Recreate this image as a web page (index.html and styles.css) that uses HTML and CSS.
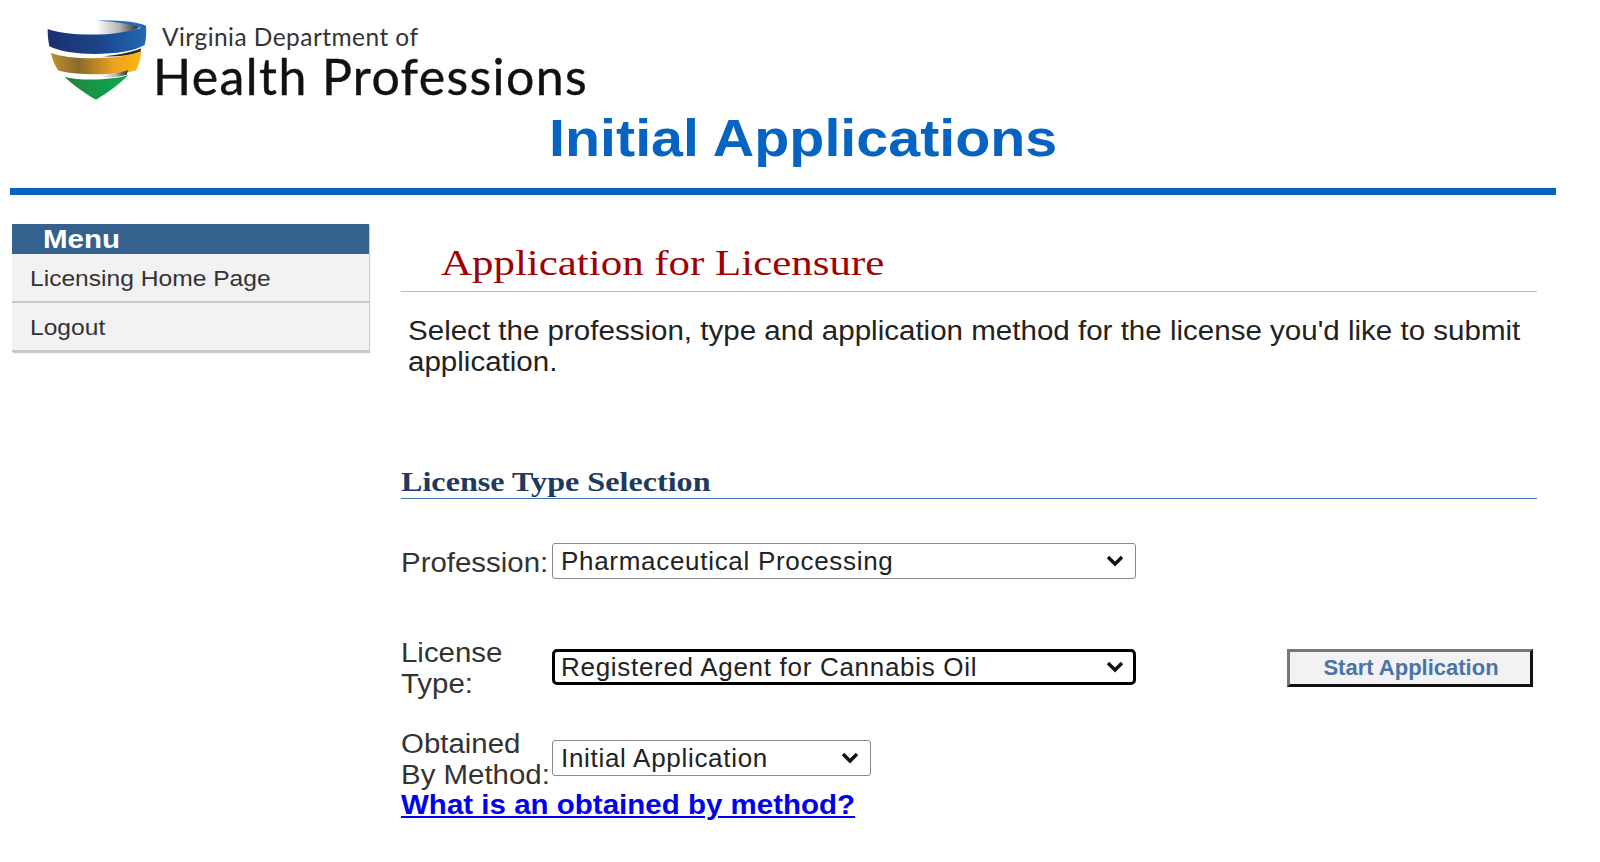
FILE: index.html
```html
<!DOCTYPE html>
<html lang="en">
<head>
    <meta charset="UTF-8">
    <meta name="viewport" content="width=device-width, initial-scale=1.0">
    <title>Initial Applications</title>
    <link rel="stylesheet" href="styles.css">
</head>
<body>
    <header class="site-header">
        <div class="brand">
            <svg class="brand-logo" width="104" height="84" viewBox="50 30 312 252" aria-hidden="true">
                <defs>
                    <linearGradient id="blueBand" x1="0" x2="1" y1="0" y2="0">
                        <stop offset="0" stop-color="#1c2f6e"/>
                        <stop offset="0.5" stop-color="#1b4388"/>
                        <stop offset="1" stop-color="#2069b5"/>
                    </linearGradient>
                    <linearGradient id="goldBand" x1="0" x2="1" y1="0" y2="0">
                        <stop offset="0" stop-color="#c0912c"/>
                        <stop offset="0.3" stop-color="#8a6a2c"/>
                        <stop offset="0.7" stop-color="#eaa31e"/>
                        <stop offset="1" stop-color="#fdb515"/>
                    </linearGradient>
                    <linearGradient id="greenBand" x1="0" x2="1" y1="0" y2="0">
                        <stop offset="0" stop-color="#2f7f3c"/>
                        <stop offset="0.6" stop-color="#0f9c4a"/>
                        <stop offset="1" stop-color="#12a650"/>
                    </linearGradient>
                    <linearGradient id="innerBand" x1="0" x2="1" y1="0" y2="0">
                        <stop offset="0.35" stop-color="#ffffff"/>
                        <stop offset="0.7" stop-color="#b5b5b5"/>
                        <stop offset="1" stop-color="#2a2a2a"/>
                    </linearGradient>
                </defs>
                <path d="M205 36C255 36 310 42 330 55C310 70 270 78 130 76C170 65 200 50 205 36Z" fill="url(#innerBand)"/>
                <path d="M205 35C260 33 325 38 350 50L345 62C320 46 265 38 205 35Z" fill="#2069b5"/>
                <path d="M55 60C110 82 270 86 350 50C352 70 350 92 346 108C290 142 120 144 60 112C56 92 55 75 55 60Z" fill="url(#blueBand)"/>
                <path d="M215 142C260 140 310 130 336 118L333 128C300 140 260 144 215 142Z" fill="#2a2a2a"/>
                <path d="M65 131C115 153 270 155 336 127C334 150 328 170 320 184C270 200 130 200 86 184C76 167 68 149 65 131Z" fill="url(#goldBand)"/>
                <path d="M170 200C215 202 265 194 296 184L292 197C260 206 215 208 170 205Z" fill="url(#innerBand)"/>
                <path d="M105 203C150 216 250 214 298 198C270 225 235 252 200 272C165 252 130 226 105 203Z" fill="url(#greenBand)"/>
            </svg>
            <div class="brand-text">
                <div class="brand-dept">Virginia Department of</div>
                <div class="brand-name">Health Professions</div>
            </div>
        </div>
        <h1 class="page-title"><span class="page-title-text">Initial Applications</span></h1>
    </header>

    <div class="page-body">
        <nav class="side-menu">
            <div class="menu-title"><span class="menu-title-text">Menu</span></div>
            <a class="menu-item" href="#"><span class="menu-item-text">Licensing Home Page</span></a>
            <a class="menu-item" href="#"><span class="menu-item-text">Logout</span></a>
        </nav>

        <main class="content">
            <h2 class="content-title"><span class="content-title-text">Application for Licensure</span></h2>
            <p class="intro">Select the profession, type and application method for the license you'd like to submit application.</p>

            <h3 class="section-title"><span class="section-title-text">License Type Selection</span></h3>

            <div class="field field-profession">
                <label class="field-label" for="profession">Profession:</label>
                <select class="field-select" id="profession">
                    <option>Pharmaceutical Processing</option>
                </select>
            </div>

            <div class="field field-license">
                <label class="field-label" for="licenseType">License Type:</label>
                <select class="field-select focused" id="licenseType">
                    <option>Registered Agent for Cannabis Oil</option>
                </select>
                <button class="start-button" type="button">Start Application</button>
            </div>

            <div class="field field-method">
                <label class="field-label" for="method">Obtained By Method:</label>
                <select class="field-select short" id="method">
                    <option>Initial Application</option>
                </select>
            </div>
            <a class="help-link" href="#">What is an obtained by method?</a>
        </main>
    </div>
</body>
</html>
```

FILE: styles.css
```css
body {
    font-family: "Liberation Sans", Arial, sans-serif;
    background-color: #fff;
    color: #222;
    margin: 0;
    padding: 0;
}

/* the page text is drawn a bit wider than the plain font */
.menu-title-text,
.menu-item-text,
.content-title-text,
.section-title-text {
    display: inline-block;
    transform-origin: left center;
}

.site-header {
    margin: 0 44px 0 10px;
    height: 195px;
    box-sizing: border-box;
    border-bottom: 7px solid #0563c1;
}

.brand {
    display: flex;
    padding: 19px 0 0 36px;
    height: 84px;
}

.brand-logo {
    flex: none;
}

.brand-text {
    font-family: Lato, "Liberation Sans", sans-serif;
    color: #111;
    margin-left: 3px;
}

.brand-dept {
    font-size: 24.5px;
    line-height: 28px;
    letter-spacing: 0.45px;
    margin: 4px 0 0 9px;
    color: #333;
}

.brand-name {
    font-size: 50px;
    line-height: 50px;
    letter-spacing: 1.4px;
    -webkit-text-stroke: 0.4px #111;
}

.page-title {
    margin: 5px 0 0 40px;
    font-size: 52px;
    line-height: 60px;
    font-weight: bold;
    text-align: center;
    color: #0563c1;
}

.page-title-text {
    display: inline-block;
    transform: scaleX(1.104);
}

.page-body {
    display: flex;
    padding: 29px 0 0 12px;
}

.side-menu {
    flex: none;
    width: 357px;
    align-self: flex-start;
    box-shadow: 1px 1px 1px #ccc;
}

.menu-title {
    background-color: #34618e;
    color: #fff;
    font-size: 26px;
    font-weight: bold;
    line-height: 30px;
    padding-left: 31px;
}

.menu-title-text {
    transform: scaleX(1.136);
}

.menu-item {
    display: block;
    background-color: #f2f2f4;
    border-bottom: 2px solid #c8c8c8;
    color: #333;
    font-size: 22.5px;
    line-height: 45px;
    padding: 2px 0 0 18px;
    text-decoration: none;
}

.menu-item-text {
    transform: scaleX(1.093);
}

.content {
    width: 1136px;
    margin-left: 32px;
}

.content-title {
    margin: 0;
    padding: 17px 0 6px 40px;
    border-bottom: 1px solid #a9c0d8;
    font-family: "Liberation Serif", "Times New Roman", serif;
    font-size: 36px;
    line-height: 44px;
    font-weight: normal;
    color: #a00000;
}

.content-title-text {
    transform: scaleX(1.192);
}

.intro {
    width: 1032px;
    margin: 24px 0 0 7px;
    font-size: 27px;
    line-height: 30.6px;
    transform: scaleX(1.094);
    transform-origin: left top;
}

.section-title {
    margin: 89px 0 0;
    border-bottom: 1px solid #3b79b8;
    font-family: "Liberation Serif", "Times New Roman", serif;
    font-size: 28px;
    line-height: 32px;
    font-weight: bold;
    color: #1f3a60;
}

.section-title-text {
    transform: scaleX(1.148);
}

.field {
    display: grid;
    grid-template-columns: 151px 584px 151px 246px;
    align-items: center;
    font-size: 27px;
    line-height: 30.6px;
}

.field-profession {
    margin-top: 44px;
}

.field-license {
    margin-top: 57px;
}

.field-method {
    margin-top: 30px;
}

.field-label {
    width: 138px;
    margin: 2px 0 -2px;
    color: #333;
    transform: scaleX(1.09);
    transform-origin: left center;
}

.field-profession .field-label {
    white-space: nowrap;
}

.field-select {
    box-sizing: border-box;
    height: 36px;
    width: 100%;
    padding: 0 8px;
    appearance: none;
    background: #fff url("data:image/svg+xml,%3Csvg xmlns='http://www.w3.org/2000/svg' width='20' height='14' viewBox='0 0 20 14'%3E%3Cpath d='M3 3l7 7 7-7' fill='none' stroke='%23111' stroke-width='3.4'/%3E%3C/svg%3E") no-repeat right 10px center;
    border: 1px solid #8a8a8a;
    border-radius: 3px;
    font-family: "Liberation Sans", Arial, sans-serif;
    font-size: 26px;
    letter-spacing: 0.7px;
    color: #222;
}

.field-select.focused {
    border: 3px solid #000;
    border-radius: 5px;
    padding: 0 6px;
    background-position: right 8px center;
}

.field-select.short {
    width: 319px;
}

.start-button {
    grid-column: 4;
    height: 38px;
    margin-top: 2px;
    box-sizing: border-box;
    background-color: #f2f2f4;
    border: 3px solid;
    border-color: #777 #111 #111 #777;
    color: #4a74a8;
    font-family: "Liberation Sans", Arial, sans-serif;
    font-size: 22px;
    font-weight: bold;
    padding: 0 0 0 2px;
}

.help-link {
    display: block;
    width: fit-content;
    margin-top: 1px;
    font-size: 27px;
    line-height: 30px;
    font-weight: bold;
    color: #0000ee;
    transform: scaleX(1.093);
    transform-origin: left center;
}
```
